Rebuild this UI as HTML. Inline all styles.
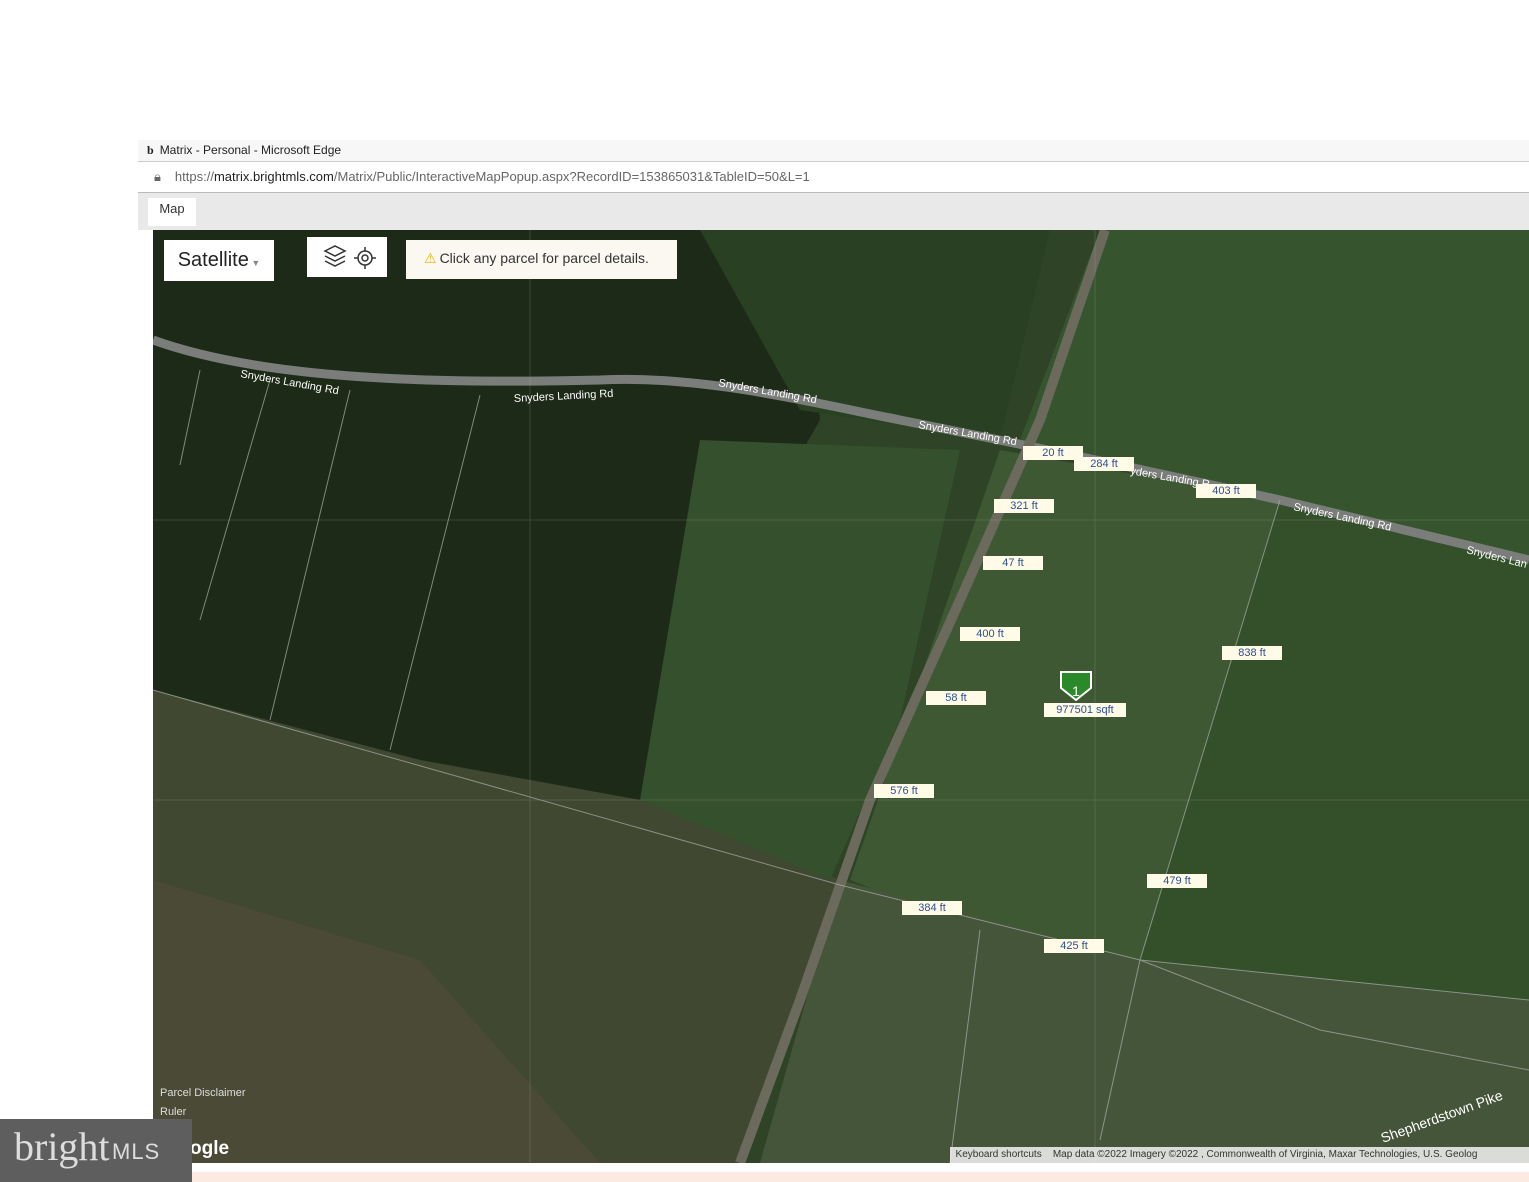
<!DOCTYPE html>
<html><head><meta charset="utf-8"><style>
body{margin:0;width:1529px;height:1182px;background:#fff;position:relative;overflow:hidden;font-family:"Liberation Sans",sans-serif}
.abs{position:absolute}
.lbl{position:absolute;background:#fffbe6;color:#2a4f9a;font-size:11px;height:14px;line-height:14px;text-align:center;width:60px}
.rd{font-size:11px;fill:#fff;font-family:"Liberation Sans",sans-serif}
</style></head><body>
<div class="abs" style="left:138px;top:140px;width:1391px;height:21px;background:#f7f7f7;border-bottom:1px solid #ccc;font-size:12px;line-height:21px;color:#222"><span style="font-family:'Liberation Serif';font-weight:bold;margin:0 6px 0 9px">b</span>Matrix - Personal - Microsoft Edge</div>
<div class="abs" style="left:138px;top:162px;width:1391px;height:30px;background:#fff;border-bottom:1px solid #bbb;font-size:13px;line-height:30px;color:#666"><span style="margin:0 14px 0 16px">&#x1F512;&#xFE0E;</span>https://<span style="color:#222">matrix.brightmls.com</span>/Matrix/Public/InteractiveMapPopup.aspx?RecordID=153865031&amp;TableID=50&amp;L=1</div>
<div class="abs" style="left:138px;top:193px;width:1391px;height:37px;background:#e9e9e9"></div>
<div class="abs" style="left:148px;top:198px;width:48px;height:28px;background:#fff;font-size:13px;line-height:22px;text-align:center;color:#333">Map</div>
<svg class="abs" style="left:153px;top:230px" width="1376" height="933" viewBox="153 230 1376 933">
<rect x="153" y="230" width="1376" height="933" fill="#2f4426"/>
<polygon points="153,230 800,230 820,420 740,560 640,800 420,760 153,690" fill="#1d2a18"/>
<polygon points="153,690 420,760 640,800 840,880 740,1163 153,1163" fill="#404832"/>
<polygon points="153,880 420,960 600,1163 153,1163" fill="#4a4a36"/>
<polygon points="700,440 960,450 900,720 830,880 640,800" fill="#34502c"/>
<polygon points="1000,450 1280,500 1140,960 980,930 850,880" fill="#3d5832"/>
<polygon points="1100,230 1529,230 1529,560 1280,500 1020,440" fill="#36552e"/>
<polygon points="1280,500 1529,560 1529,1000 1140,960" fill="#33502b"/>
<polygon points="840,880 1140,960 1529,1000 1529,1163 760,1163" fill="#45553a"/>
<polygon points="700,230 1050,230 1000,440 800,410" fill="#2a4023"/>
<path d="M153,340 C250,375 400,385 600,380 C700,375 800,400 900,420 C1000,440 1100,460 1280,500 L1529,560" stroke="#7a7d7a" stroke-width="9" fill="none"/>
<path d="M1105,230 L1040,420 L960,600 L870,800 L800,1000 L740,1163" stroke="#6b6a5c" stroke-width="10" fill="none"/>
<g stroke="#aab0a8" stroke-width="1" fill="none" opacity=".7">
<path d="M153,690 L840,885 L1140,960 L1529,1000"/><path d="M1280,500 L1140,960 L1100,1140"/><path d="M1140,960 L1320,1030 L1529,1070"/>
<path d="M200,370 L180,465"/><path d="M270,380 L200,620"/><path d="M350,390 L270,720"/><path d="M480,395 L390,750"/><path d="M980,930 L950,1163"/>
<path d="M153,520 L1529,520 M153,800 L1529,800 M530,230 L530,1163 M1095,230 L1095,1163" opacity=".3"/>
</g>
<text class="rd" x="240" y="377" transform="rotate(10 240 377)">Snyders Landing Rd</text>
<text class="rd" x="514" y="402" transform="rotate(-3 514 402)">Snyders Landing Rd</text>
<text class="rd" x="718" y="386" transform="rotate(10 718 386)">Snyders Landing Rd</text>
<text class="rd" x="918" y="428" transform="rotate(10 918 428)">Snyders Landing Rd</text>
<text class="rd" x="1130" y="474" transform="rotate(10 1130 474)">yders Landing R</text>
<text class="rd" x="1293" y="510" transform="rotate(12 1293 510)">Snyders Landing Rd</text>
<text class="rd" x="1466" y="553" transform="rotate(14 1466 553)">Snyders Lan</text>
<text class="rd" x="1383" y="1143" transform="rotate(-20 1383 1143)" style="font-size:14px">Shepherdstown Pike</text>
<path d="M1061,672 h30 v16 l-15,12 l-15,-12z" fill="#2a8a2a" stroke="#fff" stroke-width="2"/>
<text x="1076" y="696" fill="#fff" font-size="14" text-anchor="middle" font-family="Liberation Sans">1</text>
</svg>
<div class="lbl" style="left:1023px;top:446px">20 ft</div>
<div class="lbl" style="left:1074px;top:457px">284 ft</div>
<div class="lbl" style="left:1196px;top:484px">403 ft</div>
<div class="lbl" style="left:994px;top:499px">321 ft</div>
<div class="lbl" style="left:983px;top:556px">47 ft</div>
<div class="lbl" style="left:960px;top:627px">400 ft</div>
<div class="lbl" style="left:1222px;top:646px">838 ft</div>
<div class="lbl" style="left:926px;top:691px">58 ft</div>
<div class="lbl" style="left:1044px;top:703px;width:82px">977501 sqft</div>
<div class="lbl" style="left:874px;top:784px">576 ft</div>
<div class="lbl" style="left:1147px;top:874px">479 ft</div>
<div class="lbl" style="left:902px;top:901px">384 ft</div>
<div class="lbl" style="left:1044px;top:939px">425 ft</div>
<div class="abs" style="left:164px;top:240px;width:110px;height:41px;background:#fff;font-size:20px;line-height:41px;text-align:center;color:#222">Satellite<span style="font-size:9px;color:#888"> ▼</span></div>
<div class="abs" style="left:307px;top:237px;width:80px;height:40px;background:#fff"><svg width="80" height="40"><g fill="none" stroke="#333" stroke-width="1.5"><path d="M18,14 l10,-5 l10,5 l-10,5z M18,19 l10,5 l10,-5 M18,24 l10,5 l10,-5"/><circle cx="58" cy="21" r="7"/><circle cx="58" cy="21" r="3"/><path d="M58,10v4M58,28v4M47,21h4M65,21h4"/></g></svg></div>
<div class="abs" style="left:406px;top:240px;width:271px;height:39px;background:#fbf8f2;font-size:14px;line-height:36px;color:#333"><span style="color:#e8b400;margin:0 3px 0 18px">⚠</span>Click any parcel for parcel details.</div>
<div class="abs" style="left:160px;top:1084px;font-size:11px;color:#ddd;line-height:19px">Parcel Disclaimer<br>Ruler<br>&nbsp;&nbsp;&nbsp;&nbsp;d</div>
<div class="abs" style="left:190px;top:1138px;font-size:19px;color:#fff;font-weight:bold">ogle</div>
<div class="abs" style="left:950px;top:1147px;width:579px;height:16px;background:rgba(245,245,245,.85);font-size:10px;line-height:16px;color:#333;white-space:nowrap;overflow:hidden">&nbsp;&nbsp;Keyboard shortcuts &nbsp;&nbsp;&nbsp;Map data ©2022 Imagery ©2022 , Commonwealth of Virginia, Maxar Technologies, U.S. Geolog</div>
<div class="abs" style="left:192px;top:1172px;width:1337px;height:10px;background:#fbe9e2"></div>
<div class="abs" style="left:0;top:1119px;width:192px;height:63px;background:#5e5e5e;color:#ddd"><span style="position:absolute;left:14px;top:4px;font-family:'Liberation Serif';font-size:40px">bright</span><span style="position:absolute;left:112px;top:20px;font-size:22px;letter-spacing:1px">MLS</span></div>
</body></html>
